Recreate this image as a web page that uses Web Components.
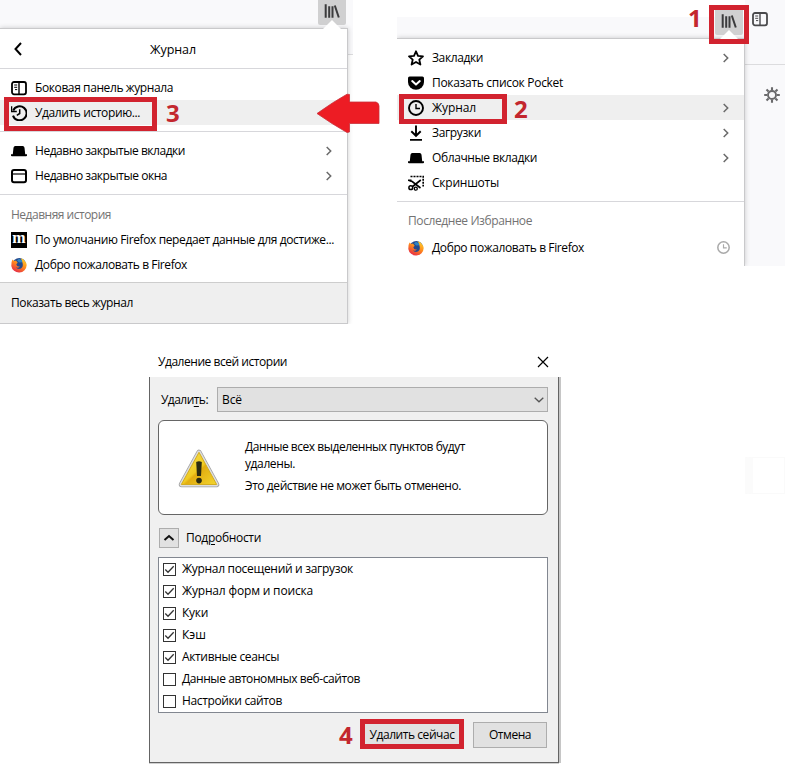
<!DOCTYPE html>
<html lang="ru">
<head>
<meta charset="utf-8">
<title>Удаление истории</title>
<style>
html,body{margin:0;background:#fff}
body{width:785px;height:765px;overflow:hidden;font:12px/16px "Open Sans","Noto Sans",sans-serif;color:#000}
</style>
</head>
<body>
<guide-page></guide-page>
<script>
const ICONS = {
sidebar:'<rect x="1" y="2" width="14" height="12.3" rx="2" fill="none" stroke="currentColor" stroke-width="1.8"/><path d="M8 2v12" stroke="currentColor" stroke-width="1.4"/><path d="M3.2 5h3M3.2 7.3h3M4 9.6h2.2" stroke="currentColor" stroke-width="1"/>',
restore:'<path d="M2.2 5.5A7 7 0 1 1 2 10.6" fill="none" stroke="currentColor" stroke-width="2"/><path d="M.5 1.2v5.3h5.3M8.7 4.3v4.2L5.8 10.3" fill="none" stroke="currentColor" stroke-width="1.5"/>',
hat:'<path d="M1.700 12 2.500 4.800Q2.700 3 4.300 3h7.400q1.600 0 1.800 1.800L14.300 12Z"/><path d="M0 11.300h16v1.200q0 .7-1 .7H1q-1 0-1-.7z"/>',
window:'<rect x="1" y="2" width="14" height="12.3" rx="2" fill="none" stroke="currentColor" stroke-width="2"/><path d="M1 6h14" stroke="currentColor" stroke-width="1.2"/>',
star:'<path d="m8 1.3 2 4.6 5 .4-3.7 3.4 1.1 4.8L8 12l-4.4 2.5 1.1-4.8L1 6.3l5-.4Z" fill="none" stroke="currentColor" stroke-width="1.8" stroke-linejoin="round"/>',
pocket:'<path d="M1.6 1.5h12.8Q16 1.5 16 3.2V7A8 7.7 0 0 1 0 7V3.2Q0 1.5 1.6 1.5Z"/><path d="m4.2 6.1 3.8 3.5 3.8-3.5" fill="none" stroke="#fff" stroke-width="2" stroke-linecap="round" stroke-linejoin="round"/>',
clock:'<circle cx="8" cy="8" r="7" fill="none" stroke="currentColor" stroke-width="1.9"/><path d="M8 4v4.5h4" fill="none" stroke="currentColor" stroke-width="1.4"/>',
download:'<path d="M8 .5v10M3.300 6.200 8 10.800l4.700-4.600M2 14.900h12" fill="none" stroke="currentColor" stroke-width="1.900"/>',
shot:'<path d="M2.500 1.500h12.700v10" fill="none" stroke="currentColor" stroke-width="1.700" stroke-dasharray="2 1"/><path d="M1.500 5.700 4.200 6.500 12.500 13M4 12 12.800 5" fill="none" stroke="currentColor" stroke-width="1.600"/><circle cx="2.800" cy="12.700" r="1.900" fill="#fff" stroke="currentColor" stroke-width="1.500"/><circle cx="7.800" cy="13.700" r="1.500" fill="#fff" stroke="currentColor" stroke-width="1.300"/><path d="M0 5.300h3.500" stroke="currentColor" stroke-width="1.600"/>',
back:'<path d="M10.5 2 5 8l5.500 6" fill="none" stroke="currentColor" stroke-width="2"/>',
chev:'<path d="m5.700 4 4 4-4 4" fill="none" stroke="#6a6a6a" stroke-width="1.500"/>',
books:'<path d="M1.700 1.200v13.500M5.200 3.200v11.500M8.500 3.200v11.500M10.800 2.500l4 12" fill="none" stroke="currentColor" stroke-width="2"/>',
gear:'<circle cx="8" cy="8" r="4" fill="none" stroke="currentColor" stroke-width="1.900"/><path d="M8 .2v3M8 12.800v3M.2 8h3M12.800 8h3M2.500 2.500l2.100 2.100M11.400 11.400l2.100 2.100M2.500 13.500l2.100-2.100M11.400 4.600l2.100-2.100" stroke="currentColor" stroke-width="2.100"/>',
fox:'<defs><linearGradient id="g" x1=".8" y1="0" x2=".2" y2="1"><stop offset="0" stop-color="#ffd52e"/><stop offset=".45" stop-color="#ff8a1c"/><stop offset="1" stop-color="#e3204c"/></linearGradient></defs><circle cx="8.300" cy="7.500" r="6.600" fill="#254a8d"/><path d="M1.500 2.500 3.200 4 5 3.600 6.700 5.700 5.300 7.200Q6 10.500 9 9.300 6.500 12.200 4.500 9.700 6.500 13 10 11.500 13 9.500 11 4.300L9.800 1.200Q13 2 14.500 5 15.500 6 15.700 8A7.750 7.750 0 0 1 .3 9Q0 5 1.500 2.500Z" fill="url(#g)"/><path d="m6 3.500 2-1.800 3 1.500.2 2-3 .4z" fill="#2f84c3"/>',
up:'<path d="m3.500 10 4.500-4 4.500 4" fill="none" stroke="#111" stroke-width="2"/>',
down:'<path d="m3.700 5.800 4.300 4 4.300-4" fill="none" stroke="#555" stroke-width="1.300"/>',
close:'<path d="m3 3 10 10M13 3 3 13" stroke="#000" stroke-width="1.200"/>'
};
const define = (name, html, after) => {
  const t = document.createElement('template');
  t.innerHTML = html;
  customElements.define(name, class extends HTMLElement {
    constructor(){ super(); this.attachShadow({mode:'open'}).append(t.content.cloneNode(true)); }
    connectedCallback(){ if(after) after(this, this.shadowRoot); }
  });
};

// Single-line label; "w" sets its advance width through letter spacing.
define('ui-text','<style>:host{display:inline-block;white-space:nowrap;flex:none}</style><span><slot></slot></span>',(el,r)=>{
  const w=+el.getAttribute('w'), s=r.querySelector('span');
  if(w){ const n=el.textContent.length; s.style.letterSpacing=((w-s.getBoundingClientRect().width)/n)+'px'; }
});
define('ui-icon','<style>:host{display:block;width:16px;height:16px;flex:none}svg{display:block;width:100%;height:100%;fill:currentColor}</style><div></div>',(el,r)=>{
  r.querySelector('div').style.height='100%';
  r.querySelector('div').innerHTML='<svg viewBox="0 0 16 16">'+(ICONS[el.getAttribute('name')]||'')+'</svg>';
});
define('m-badge','<style>:host{display:flex;justify-content:center;align-items:center;width:16px;height:16px;background:#000;color:#fff;font:bold 16px/16px "Liberation Serif",serif;flex:none}span{margin-top:-4px}</style><span>m</span>');
define('menu-row','<style>:host{display:flex;align-items:center;height:25px;gap:8px;padding:0 13px 0 11px}:host([hot]){background:#efefef}.sp{flex:1}.tail{display:flex;color:#aaa}</style><slot name="icon"></slot><slot></slot><span class="sp"></span><div class="tail"><slot name="end"></slot></div>');
define('menu-line','<style>:host{display:block;height:1px;background:#d7d7db}</style>');
define('menu-head','<style>:host{display:flex;align-items:center;height:25px;padding-left:11px;color:#737373}</style><slot></slot>');
define('red-frame','<style>:host{position:absolute;box-sizing:border-box;border:5px solid #d2232f;pointer-events:none}</style>');
define('step-number','<style>:host{position:absolute;font:bold 24px/24px "Open Sans","Noto Sans",sans-serif;color:#c3272e}</style><slot></slot>');
define('library-button','<style>:host{position:relative;display:flex;justify-content:center;width:28px;height:25px;background:#d0d0d1;border-radius:0 0 2px 2px;color:#3b3b3d}ui-icon{margin-top:3px}i{position:absolute;left:5px;bottom:-4px;border:9px solid transparent;border-top:0;border-bottom-color:#fff}</style><ui-icon name="books"></ui-icon><i></i>');

define('history-shot',`<style>
:host{display:block;position:relative;width:353px;height:324px;background:#fff;overflow:hidden}
.bar{height:28px;background:#f9f9fb;display:flex;padding-left:318px}
.bar library-button{z-index:2}
.side{position:absolute;left:348px;top:28px;width:5px;height:26px;background:#f9f9fb;border-bottom:1px solid #dcdcde}
.panel{box-sizing:border-box;width:348px;height:296px;border:1px solid #c9c9cb;border-left:0;background:#fff;box-shadow:0 0 5px #0003;position:relative;display:flex;flex-direction:column}
.title{height:39px;display:grid;grid-template-columns:150px 1fr;align-items:center}
.title ui-icon{margin-left:10px;width:17px}.title ui-text{font-size:12.500px;padding-top:2px}
.g1{padding:6px 0 6px}.g2{padding:6px 0}.g3{padding:7px 0 5px}
.foot{flex:1;background:#efefef;border-top:1px solid #cdcdcd;display:flex;align-items:center;padding:0 0 0 11px}
</style>
<div class="bar"><library-button></library-button></div><div class="side"></div>
<div class="panel">
<div class="title"><ui-icon name="back"></ui-icon><ui-text w="46">Журнал</ui-text></div><menu-line></menu-line>
<div class="g1"><menu-row><ui-icon slot="icon" name="sidebar"></ui-icon><ui-text w="138">Боковая панель журнала</ui-text></menu-row>
<menu-row hot><ui-icon slot="icon" name="restore"></ui-icon><ui-text w="105">Удалить историю...</ui-text></menu-row></div><menu-line></menu-line>
<div class="g2"><menu-row><ui-icon slot="icon" name="hat"></ui-icon><ui-text w="150">Недавно закрытые вкладки</ui-text><ui-icon slot="end" name="chev" style="margin-right:-3px"></ui-icon></menu-row>
<menu-row><ui-icon slot="icon" name="window"></ui-icon><ui-text w="132">Недавно закрытые окна</ui-text><ui-icon slot="end" name="chev" style="margin-right:-3px"></ui-icon></menu-row></div><menu-line></menu-line>
<div class="g3"><menu-head><ui-text w="100">Недавняя история</ui-text></menu-head>
<menu-row><m-badge slot="icon"></m-badge><ui-text w="299">По умолчанию Firefox передает данные для достиже...</ui-text></menu-row>
<menu-row><ui-icon slot="icon" name="fox"></ui-icon><ui-text w="152">Добро пожаловать в Firefox</ui-text></menu-row></div>
<div class="foot"><ui-text w="122">Показать весь журнал</ui-text></div>
</div>`);

define('library-shot',`<style>
:host{display:grid;grid-template-columns:348px 40px;width:388px;height:266px;overflow:hidden;position:relative}
.bar{height:21px;margin-top:17px;background:#f9f9fb}
.lib{position:absolute;left:318px;top:10px;z-index:2}
.panel{box-sizing:border-box;height:228px;border:solid #c9c9cb;border-width:1px 1px 0 0;background:#fff;position:relative;box-shadow:0 0 5px #0003}
.rows{padding:6px 0 6px}.rest{padding-top:6px}.rest menu-row{margin-top:2px}
.side{background:#f9f9fb;color:#4a4a4c}
.top{height:65px;box-sizing:border-box;border-bottom:1px solid #dcdcde;padding:11px 0 0 7px}
.gear{color:#6a6a6c;padding:22px 0 0 19px}
.cl{width:13px;height:13px;margin-right:1px}
</style>
<div><div class="bar"></div><div class="panel"><div class="rows">
<menu-row><ui-icon slot="icon" name="star"></ui-icon><ui-text w="51">Закладки</ui-text><ui-icon slot="end" name="chev" style="margin-right:-3px"></ui-icon></menu-row>
<menu-row><ui-icon slot="icon" name="pocket"></ui-icon><ui-text w="131">Показать список Pocket</ui-text></menu-row>
<menu-row hot><ui-icon slot="icon" name="clock"></ui-icon><ui-text w="44">Журнал</ui-text><ui-icon slot="end" name="chev" style="margin-right:-3px"></ui-icon></menu-row>
<menu-row><ui-icon slot="icon" name="download"></ui-icon><ui-text w="49">Загрузки</ui-text><ui-icon slot="end" name="chev" style="margin-right:-3px"></ui-icon></menu-row>
<menu-row><ui-icon slot="icon" name="hat"></ui-icon><ui-text w="105">Облачные вкладки</ui-text><ui-icon slot="end" name="chev" style="margin-right:-3px"></ui-icon></menu-row>
<menu-row><ui-icon slot="icon" name="shot"></ui-icon><ui-text w="67">Скриншоты</ui-text></menu-row></div><menu-line></menu-line>
<div class="rest"><menu-head><ui-text w="124">Последнее Избранное</ui-text></menu-head>
<menu-row><ui-icon slot="icon" name="fox"></ui-icon><ui-text w="152">Добро пожаловать в Firefox</ui-text><ui-icon class="cl" slot="end" name="clock"></ui-icon></menu-row></div>
</div></div>
<div class="side"><div class="top"><ui-icon name="sidebar"></ui-icon></div><div class="gear"><ui-icon name="gear"></ui-icon></div></div>
<library-button class="lib"></library-button>`);

define('check-row','<style>:host{display:flex;align-items:center;gap:6px;height:22px}b{box-sizing:border-box;width:13px;height:13px;border:1px solid #333;background:#fff;display:block}svg{display:none;width:11px;height:11px}:host([on]) svg{display:block}</style><b><svg viewBox="0 0 11 11"><path d="m1.300 5.500 2.700 2.700 5.700-6" fill="none" stroke="#333" stroke-width="1.300"/></svg></b><slot></slot>');
define('push-button','<style>:host{box-sizing:border-box;display:flex;align-items:center;justify-content:center;background:#e1e1e1;border:1px solid #adadad}</style><slot></slot>');
define('warning-sign',`<style>:host{display:block;width:44px;height:41px}svg{display:block}</style><svg width="44" height="41" viewBox="0 0 44 41"><defs><linearGradient id="w" x1="0" y1="0" x2="1" y2="1"><stop offset="0" stop-color="#f7e45a"/><stop offset=".5" stop-color="#f0cb22"/><stop offset=".55" stop-color="#e2ad10"/><stop offset="1" stop-color="#f3d62e"/></linearGradient></defs><path d="M22 4.500 39.500 36.500H4.500Z" fill="#aaa" stroke="#a0a0a0" stroke-width="5.500" stroke-linejoin="round"/><path d="M22 4.500 39.500 36.500H4.500Z" fill="#ddd" stroke="#dedede" stroke-width="3.900" stroke-linejoin="round"/><path d="M22 4.300 39.700 36.500H4.300Z" fill="url(#w)" stroke="#d3ac20" stroke-linejoin="round"/><path d="M19.200 14q2.800-1.500 5.600 0L24 28h-4Z" fill="#2b2b12"/><circle cx="22" cy="32.600" r="2.800" fill="#2b2b12"/></svg>`);
define('clear-dialog',`<style>
:host{display:block;width:411px;height:418px}
header{height:31px;padding-top:1px;display:flex;align-items:center;justify-content:space-between;padding-right:9px;padding-left:9px}
header ui-text{margin-top:1px}
.body{box-sizing:border-box;width:410px;height:386px;background:#f0f0f0;border:1px solid #646464;border-top:0;padding:10px 10px 0 8px;box-shadow:2px 0 0 #c6c6c6,0 1px 0 #d0d0d0}
.pick{display:flex;align-items:center;height:25px;padding-left:3px;margin-bottom:8px}
.label{width:56px}
.select{box-sizing:border-box;width:331px;height:25px;background:#e1e1e1;border:1px solid #adadad;display:flex;align-items:center;justify-content:space-between;padding:0 0 0 4px}
.note{box-sizing:border-box;height:95px;border:1px solid #666;border-radius:6px;background:#fff;display:grid;grid-template-columns:86px 1fr;padding-top:17px}
.note warning-sign{margin:10px 0 0 18px}
.copy{display:flex;flex-direction:column;line-height:17px;align-items:flex-start}
.copy ui-text:last-child{margin-top:5px}
.det{display:flex;align-items:center;gap:7px;height:20px;margin:13px 0 9px 1px}
.det push-button{width:20px;height:20px}
.list{box-sizing:border-box;height:156px;background:#fff;border:1px solid #828790;padding-left:4px}
.actions{display:flex;justify-content:flex-end;gap:9px;padding:9px 1px 0 0}
.actions push-button{height:26px;width:74px}.actions .go{width:104px}
.u{text-decoration:underline;text-underline-offset:2px}
</style>
<header><ui-text w="129">Удаление всей истории</ui-text><ui-icon name="close"></ui-icon></header>
<div class="body"><div class="pick"><div class="label"><ui-text w="47">Удали<span class="u" style="text-decoration:underline;text-underline-offset:2px">т</span>ь:</ui-text></div><div class="select"><ui-text w="20">Всё</ui-text><ui-icon name="down"></ui-icon></div></div>
<div class="note"><warning-sign></warning-sign><div class="copy"><ui-text w="220">Данные всех выделенных пунктов будут</ui-text><ui-text w="50">удалены.</ui-text><ui-text w="216">Это действие не может быть отменено.</ui-text></div></div>
<div class="det"><push-button><ui-icon name="up"></ui-icon></push-button><ui-text w="75">Под<span class="u">р</span>обности</ui-text></div>
<div class="list">
<check-row on><ui-text w="171">Журнал посещений и загрузок</ui-text></check-row>
<check-row on><ui-text w="131">Журнал форм и поиска</ui-text></check-row>
<check-row on><ui-text w="26">Куки</ui-text></check-row>
<check-row on><ui-text w="24">Кэш</ui-text></check-row>
<check-row on><ui-text w="97">Активные сеансы</ui-text></check-row>
<check-row><ui-text w="178">Данные автономных веб-сайтов</ui-text></check-row>
<check-row><ui-text w="100">Настройки сайтов</ui-text></check-row></div>
<div class="actions"><push-button class="go"><ui-text w="85">Удалить сейчас</ui-text></push-button><push-button><ui-text w="42">Отмена</ui-text></push-button></div>
</div>`);

define('guide-page',`<style>
:host{display:block;position:relative;width:785px;height:765px;background:#fff}
.top{display:flex;justify-content:space-between;align-items:flex-start;height:345px}
clear-dialog{margin-left:149px}
.arrow{position:absolute;left:316px;top:93px}
.tile{position:absolute;left:745px;top:457px;width:31px;height:35px;border:1px solid #fafafa;border-left:8px solid #fbfbfb}
</style>
<div class="top"><history-shot></history-shot><library-shot></library-shot></div>
<clear-dialog></clear-dialog>
<div class="tile"></div>
<svg class="arrow" width="64" height="41" viewBox="0 0 64 41"><path d="M1 20.500Q17 9 31 1.200L33.500 1.500V9H60Q63 10 63 13V30.500H33.500V39L31 39.500Q16 31 1 20.500Z" fill="#ed1c24" stroke="#c9303a" stroke-width=".8"/></svg>
<red-frame style="left:4px;top:97px;width:153px;height:34px"></red-frame><step-number style="left:166px;top:101px">3</step-number>
<red-frame style="left:399px;top:94px;width:108px;height:30px"></red-frame><step-number style="left:514px;top:97px">2</step-number>
<red-frame style="left:709px;top:5px;width:40px;height:39px"></red-frame><step-number style="left:688px;top:6px">1</step-number>
<red-frame style="left:360px;top:719px;width:104px;height:30px"></red-frame><step-number style="left:339px;top:723px">4</step-number>`);
</script>
</body>
</html>
